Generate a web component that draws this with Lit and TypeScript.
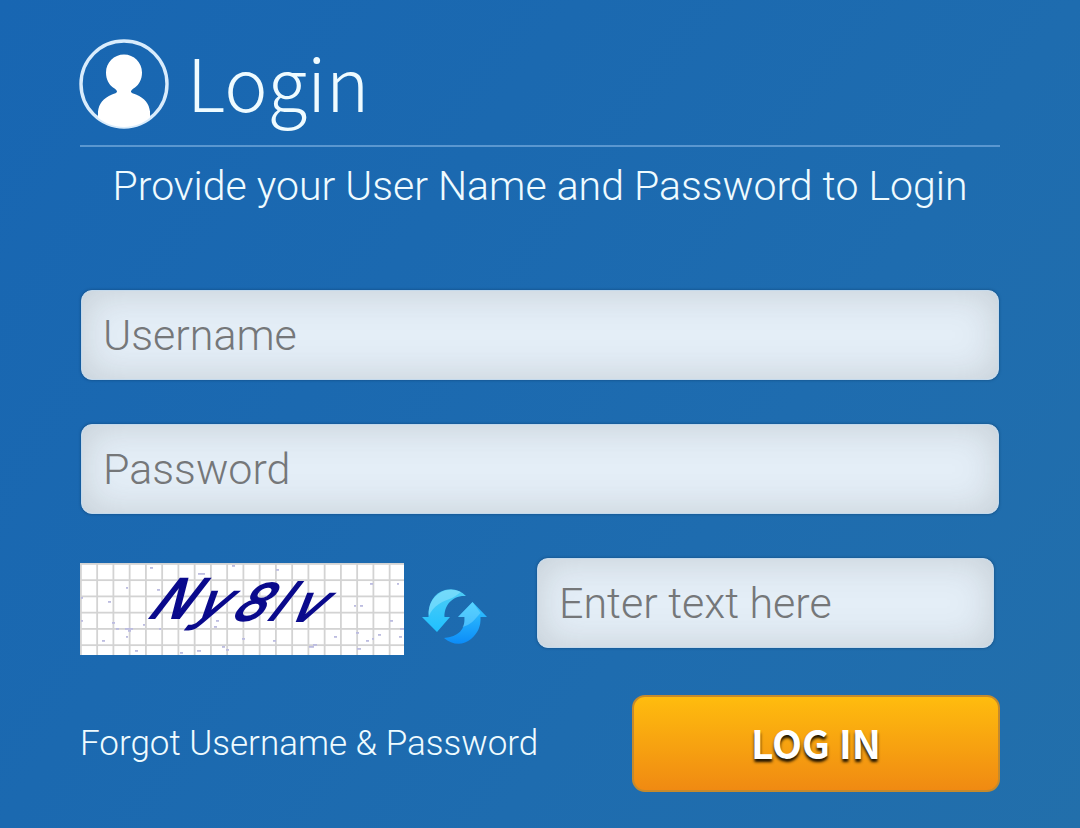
import { LitElement, html, css, svg } from "lit";
import { customElement } from "lit/decorators.js";

const CAPTCHA_WIDTH = 324;
const CAPTCHA_HEIGHT = 92;
const CELL = 16.25;

// Pale ink specks scattered over the captcha grid.
const SPECKS: [number, number, number][] = [
  [70, 4, 3], [118, 10, 7], [152, 2, 3], [196, 6, 3], [46, 24, 2], [77, 26, 3],
  [28, 38, 3], [32, 59, 3], [36, 65, 3], [45, 65, 8], [48, 67, 3], [46, 73, 2],
  [22, 77, 3], [63, 61, 2], [79, 65, 2], [134, 63, 3], [136, 57, 3], [162, 75, 3],
  [193, 77, 3], [229, 83, 5], [233, 81, 4], [142, 83, 3], [146, 86, 3], [117, 87, 4],
  [55, 87, 3], [100, 89, 3], [254, 73, 3], [276, 69, 3], [286, 77, 3], [292, 75, 2],
  [298, 71, 3], [310, 57, 3], [319, 73, 3], [320, 65, 4], [277, 85, 4], [290, 20, 3],
  [274, 42, 2], [280, 42, 3], [317, 20, 2], [1, 34, 2], [1, 57, 2],
];

@customElement("app-root")
export class AppRoot extends LitElement {
  static styles = css`
    :host {
      display: block;
      min-height: 100vh;
      box-sizing: border-box;
      padding: 39px 80px 36px;
      background: linear-gradient(125deg, #1866b2 0%, #1b69b0 35%, #1e6caf 65%, #226fab 100%);
      color: #effbff;
      font-family: Roboto, sans-serif;
      font-weight: 300;
    }
    *, *::before, *::after {
      box-sizing: border-box;
    }
    .header {
      display: flex;
      align-items: flex-start;
      gap: 18px;
      margin: 0 0 16px;
    }
    .avatar {
      display: block;
      width: 90px;
      height: 90px;
      margin-left: -1px;
    }
    .title {
      margin: 0;
      font-family: "Noto Sans CJK SC", sans-serif;
      font-weight: 200;
      font-size: 73px;
      line-height: 82px;
    }
    .intro {
      margin: 0;
      padding-top: 15px;
      border-top: 2px solid #5a97d0;
      font-size: 41px;
      line-height: 48px;
      text-align: center;
    }
    .form {
      display: grid;
      gap: 44px;
      margin-top: 80px;
    }
    .field {
      display: block;
      margin: 0 1px;
    }
    .input {
      display: block;
      width: 100%;
      height: 90px;
      padding: 0 21px;
      border: 1px solid #c3d9ec;
      border-radius: 11px;
      background: #e4eef7;
      box-shadow: inset 0 0 38px rgba(80, 85, 85, 0.22), 0 0 3px rgba(10, 50, 90, 0.6);
      color: #444;
      font: 300 43px/48px Roboto, sans-serif;
      outline: none;
    }
    .input::placeholder {
      color: #757779;
      opacity: 1;
    }
    .check {
      display: grid;
      grid-template-columns: 324fr 66px 530fr;
      align-items: start;
    }
    .captcha {
      display: block;
      width: 100%;
      margin-top: 5px;
    }
    .code {
      font: italic 400 50px "DejaVu Sans", sans-serif;
      fill: #0a0a8c;
      stroke: #0a0a8c;
      stroke-width: 2px;
    }
    .code-lead {
      font-size: 54px;
    }
    .refresh {
      display: block;
      width: 66px;
      height: 66px;
      margin: 28px 0 0 17px;
      padding: 0;
      border: 0;
      background: none;
      cursor: pointer;
    }
    .refresh svg {
      display: block;
    }
    .check .field {
      margin: 0 6px 0 67px;
    }
    .actions {
      display: flex;
      align-items: center;
      justify-content: space-between;
      margin-top: -4px;
    }
    .forgot {
      color: inherit;
      font-size: 35px;
      line-height: 44px;
      text-decoration: none;
    }
    .submit {
      width: 40%;
      height: 97px;
      padding: 0 0 4px;
      border: 2px solid #c58a2c;
      border-radius: 13px;
      background: linear-gradient(#ffbc0e, #f08a12);
      color: #fff;
      font: 700 39px/56px "Noto Sans CJK SC", sans-serif;
      text-shadow: 0 3px 3px rgba(0, 0, 0, 0.9);
      cursor: pointer;
    }
  `;

  private renderAvatar() {
    return html`
      <svg class="avatar" viewBox="0 0 90 90" aria-hidden="true">
        <circle cx="45" cy="45" r="43" fill="none" stroke="#d9ecfc" stroke-width="3.4" />
        <path
          d="M45 15.500c-10 0-18 8-18 18 0 7 3 12 7 15 6 4 5 5-1 7-9 4-13 9-14 17v6c7 6 16 9.500 26 9.500s19-3.500 26-9.500v-6c-1-8-5-13-14-17-6-2-7-3-1-7 4-3 7-8 7-15 0-10-8-18-18-18z"
          fill="#fff"
        />
      </svg>
    `;
  }

  private renderCaptcha() {
    const columns = Array.from({ length: 20 }, (_, i) => i * CELL);
    const rows = Array.from({ length: 6 }, (_, i) => i * CELL);
    return html`
      <svg class="captcha" viewBox="0 0 ${CAPTCHA_WIDTH} ${CAPTCHA_HEIGHT}" role="img" aria-label="Captcha">
        <rect width=${CAPTCHA_WIDTH} height=${CAPTCHA_HEIGHT} fill="#fff" />
        ${columns.map((x) => svg`<rect x=${x} y="0" width="1.8" height=${CAPTCHA_HEIGHT} fill="#d3d3d3" />`)}
        ${rows.map((y) => svg`<rect x="0" y=${y} width=${CAPTCHA_WIDTH} height="1.8" fill="#d3d3d3" />`)}
        ${SPECKS.map(([x, y, w]) => svg`<rect x=${x} y=${y} width=${w} height="1.8" fill="#bcbce0" />`)}
        <g transform="skewX(-30)">
          <text class="code" x="100 145 184 220 242" y="55 56 57 57 58"><tspan class="code-lead">N</tspan>y8lv</text>
        </g>
      </svg>
    `;
  }

  private renderRefreshIcon() {
    return html`
      <svg width="66" height="66" viewBox="0 0 66 66" aria-hidden="true">
        <defs>
          <linearGradient id="down" x1="0" y1="0" x2="0" y2="1">
            <stop offset="0" stop-color="#4fcdf5" />
            <stop offset="1" stop-color="#1fc0ff" />
          </linearGradient>
          <linearGradient id="up" x1="0" y1="0" x2="0" y2="1">
            <stop offset="0" stop-color="#35c8ff" />
            <stop offset="1" stop-color="#0c8cf8" />
          </linearGradient>
        </defs>
        <path d="M45 10C39 4 32 2 24 4 13 7 7 17 7.500 31H1l15 15 13-15h-5.500C23 20 31 9 45 10z" fill="url(#down)" />
        <path d="M40 6C29 1 19 5 13 12 8 18 7 25 8 30c4-11 15-15 23-18 4-2 6-4 9-6z" fill="#a5ecff" opacity=".45" />
        <path d="M23 52c8 7 19 8 27 1 7-6 10-13 9.500-22H66L51.500 16 37 31h6.500c1 12-6 20-20.500 21z" fill="url(#up)" />
        <path d="M51.500 16 37 31h6.500c0 5 0 7-2 10 8-2 12-7 18-14z" fill="#8ce4ff" opacity=".4" />
      </svg>
    `;
  }

  render() {
    return html`
      <header class="header">
        ${this.renderAvatar()}
        <h1 class="title">Login</h1>
      </header>
      <p class="intro">Provide your User Name and Password to Login</p>
      <form class="form" @submit=${(e: Event) => e.preventDefault()}>
        <label class="field">
          <input class="input" type="text" name="username" placeholder="Username" aria-label="Username" />
        </label>
        <label class="field">
          <input class="input" type="password" name="password" placeholder="Password" aria-label="Password" />
        </label>
        <div class="check">
          ${this.renderCaptcha()}
          <button class="refresh" type="button" aria-label="Refresh captcha">${this.renderRefreshIcon()}</button>
          <label class="field">
            <input class="input" type="text" name="captcha" placeholder="Enter text here" aria-label="Enter text here" />
          </label>
        </div>
        <div class="actions">
          <a class="forgot" href="#forgot">Forgot Username &amp; Password</a>
          <button class="submit" type="submit">LOG IN</button>
        </div>
      </form>
    `;
  }
}
